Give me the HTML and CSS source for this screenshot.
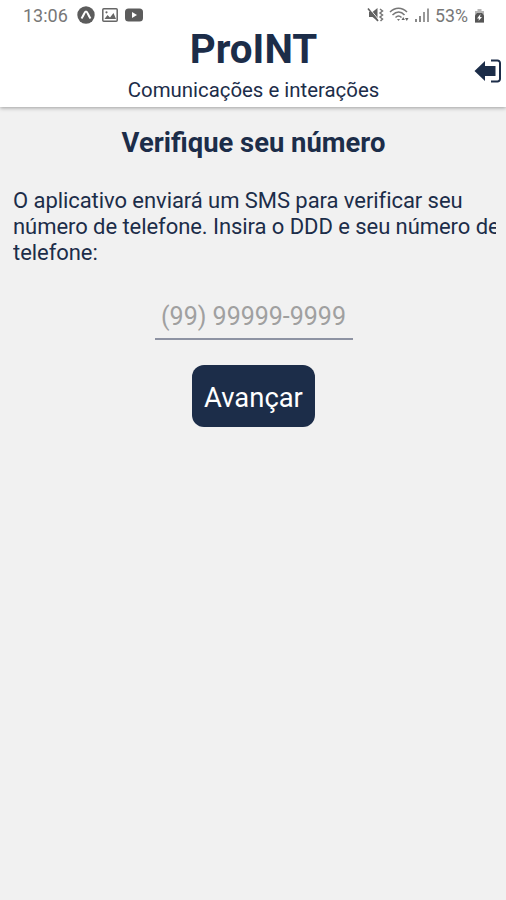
FILE: index.html
```
<!DOCTYPE html>
<html lang="pt-BR">

<head>
  <meta charset="UTF-8">
  <title>ProINT</title>
  <link rel="stylesheet" href="styles.css">
</head>

<body>
  <header class="header">
    <div class="status">
      <div class="status-left">
        <span class="clock">13:06</span>
        <svg width="18" height="18" viewBox="0 0 18 18">
          <circle cx="9" cy="9" r="8.7" fill="#5c5c5c"/>
          <path d="M4.500 12.500C7 9 7.500 5.500 9 5.500s2 3.500 4.500 7" fill="none" stroke="#fff" stroke-width="2"/>
        </svg>
        <svg width="16" height="14" viewBox="0 0 16 14">
          <rect x="0.800" y="0.800" width="14.400" height="12.400" rx="1" fill="none" stroke="#666" stroke-width="1.500"/>
          <path d="M2.500 11l3-4 2.500 2.500 3.500-4.500 2.500 6z" fill="#666"/>
          <circle cx="4.500" cy="4.300" r="1.100" fill="#666"/>
        </svg>
        <svg width="18" height="14" viewBox="0 0 18 14">
          <rect x="0" y="0.500" width="18" height="13" rx="3.500" fill="#5c5c5c"/>
          <path d="M7 4l5 3-5 3z" fill="#fff"/>
        </svg>
      </div>
      <div class="status-right">
        <svg width="17" height="16" viewBox="0 0 17 16">
          <path d="M2 5h3.500L10.500 1v13l-5-4H2z" fill="#606060"/>
          <path d="M2.500 1.500l9 11" stroke="#fff" stroke-width="1"/>
          <path d="M1 1.500l10 12.500" stroke="#606060" stroke-width="1.600"/>
          <path d="M13 2l2.500 2-2.500 2 2.500 2-2.500 2 2.500 2-2 2" fill="none" stroke="#777" stroke-width="1.500"/>
        </svg>
        <svg width="20" height="16" viewBox="0 0 20 16">
          <g fill="none" stroke="#777" stroke-width="1.500">
            <path d="M1 5c5-5 12-5 17 0"/>
            <path d="M3.500 8c4-4 8.500-4 12 0"/>
            <path d="M6.500 10.500c2-2 4-2 6 0"/>
          </g>
          <path d="M8 12h3l-1.500 2z" fill="#777"/>
          <path d="M12.500 13l1.700-3 1.700 3zM16 11h3.500l-1.700 3z" fill="#666"/>
        </svg>
        <svg width="16" height="14" viewBox="0 0 16 14">
          <path d="M1 11v3h2v-3zM5 8v6h2V8z" fill="#888"/>
          <path d="M9 4v10h2V4zM13 0.500v13.500h2V0.500z" fill="#999"/>
        </svg>
        <span class="battery">53%</span>
        <svg width="11" height="15" viewBox="0 0 11 15">
          <path d="M3.500 1h4v2H10v11.500H1V3h2.500z" fill="#b5b5b5"/>
          <path d="M3 5h5l2 2.500v7H1v-7z" fill="#555"/>
          <path d="M6.500 6L3 10.500h2L4.500 13 8 9H6z" fill="#fff"/>
        </svg>
      </div>
    </div>
    <h1>ProINT</h1>
    <p class="subtitle">Comunicações e interações</p>
    <button class="exit" aria-label="Sair">
      <svg width="28" height="24" viewBox="0 0 28 24">
        <path d="M0.500 12L11 2v5h10.500v10H11V22z" fill="#1c2d49"/>
        <path d="M17 1.500h6.500a2.500 2.500 0 0 1 2.500 2.500v16a2.500 2.500 0 0 1-2.500 2.500H17" fill="none" stroke="#1c2d49" stroke-width="2"/>
      </svg>
    </button>
  </header>

  <main>
    <h2>Verifique seu número</h2>
    <p class="info">O aplicativo enviará um SMS para verificar seu<br>número de telefone. Insira o DDD e seu número de<br>telefone:</p>
    <input class="phone" type="tel" placeholder="(99) 99999-9999">
    <button class="next">Avançar</button>
  </main>
</body>

</html>
```

FILE: styles.css
```
* {
  box-sizing: border-box;
}
body {
  margin: 0;
  min-height: 100vh;
  background-color: #f1f1f1;
  color: #1c2d49;
  font-family: Roboto, "Liberation Sans", sans-serif;
}
h1, h2, p {
  margin: 0;
  white-space: nowrap;
}
.header {
  position: relative;
  height: 107px;
  background-color: #fff;
  box-shadow: 0 1px 4px rgba(0, 0, 0, 0.35);
  text-align: center;
}
.status {
  display: flex;
  justify-content: space-between;
  height: 30px;
  padding: 0 21px 0 23px;
  color: #777;
  font-size: 18px;
}
.status-left, .status-right {
  display: flex;
  align-items: center;
}
.status-left {
  gap: 7px;
}
.status-right {
  gap: 5px;
}
.clock {
  width: 47px;
  text-align: left;
}
.battery {
  width: 34px;
  font-size: 17.8px;
  text-align: left;
}
h1 {
  height: 47px;
  padding-left: 1px;
  font-size: 40.3px;
  line-height: 39px;
}
.subtitle {
  padding-left: 1px;
  font-size: 20.4px;
  line-height: 26px;
}
button {
  border: 0;
  font-family: inherit;
}
.exit {
  position: absolute;
  top: 59px;
  right: 4px;
  padding: 0;
  background: none;
}
.exit svg {
  display: block;
}
main {
  display: flex;
  flex-direction: column;
  align-items: center;
  padding-left: 1px;
}
h2 {
  margin-top: 19px;
  font-size: 27.4px;
  line-height: 34px;
}
.info {
  align-self: stretch;
  margin: 28px 10px 0 12px;
  overflow: hidden;
  font-size: 22px;
  line-height: 26px;
  letter-spacing: -0.06px;
}
.phone {
  width: 198px;
  height: 48px;
  margin-top: 26px;
  padding: 2px 0 0;
  border: 0;
  border-bottom: 2px solid #8e93a3;
  background: none;
  font-family: inherit;
  font-size: 25px;
  text-align: center;
}
.phone::placeholder {
  color: #a0a0a0;
}
.next {
  width: 123px;
  height: 62px;
  margin-top: 25px;
  padding: 3px 0 0;
  border-radius: 12px;
  background-color: #1c2d49;
  color: #fff;
  font-size: 27.4px;
}
```
